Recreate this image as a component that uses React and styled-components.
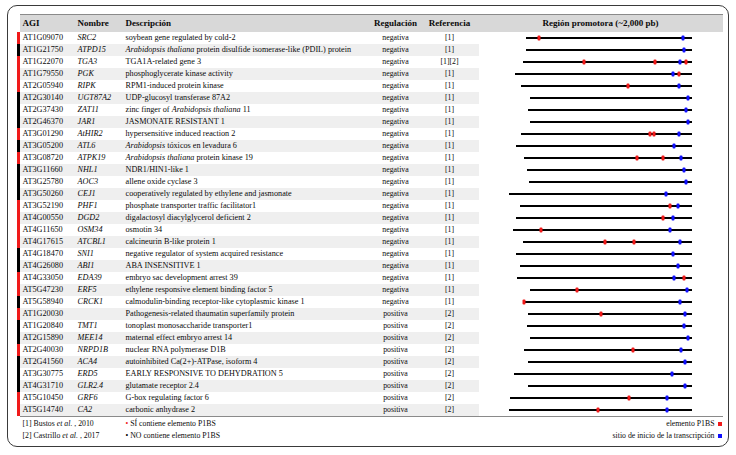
import React from 'react';
import styled, { createGlobalStyle } from 'styled-components';

const GlobalStyle = createGlobalStyle`
    html, body {
        margin: 0;
        padding: 0;
        background: #ffffff;
    }
    body {
        font-family: "Liberation Serif", "Times New Roman", serif;
        color: #0a0a0a;
    }
`

const COLS = '3px 55px 48px 248px 50px 58px 1fr';
const PROMO_X = 479;
const RED = '#f01a1a';
const BLUE = '#1010ff';

const rows = [
    { agi: 'AT1G09070', name: 'SRC2', desc: 'soybean gene regulated by cold-2', reg: 'negativa', ref: '[1]', p1bs: true, start: 526, marks: [['r', 539], ['b', 683]] },
    { agi: 'AT1G21750', name: 'ATPD15', desc: <><i>Arabidopsis thaliana</i> protein disulfide isomerase-like (PDIL) protein</>, reg: 'negativa', ref: '[1]', p1bs: false, start: 526, marks: [['b', 684]] },
    { agi: 'AT1G22070', name: 'TGA3', desc: 'TGA1A-related gene 3', reg: 'negativa', ref: '[1][2]', p1bs: true, start: 523, marks: [['r', 584], ['r', 655], ['b', 680], ['r', 686]] },
    { agi: 'AT1G79550', name: 'PGK', desc: 'phosphoglycerate kinase activity', reg: 'negativa', ref: '[1]', p1bs: true, start: 515, marks: [['b', 673], ['r', 679]] },
    { agi: 'AT2G05940', name: 'RIPK', desc: 'RPM1-induced protein kinase', reg: 'negativa', ref: '[1]', p1bs: true, start: 521, marks: [['r', 628], ['b', 679]] },
    { agi: 'AT2G30140', name: 'UGT87A2', desc: 'UDP-glucosyl transferase 87A2', reg: 'negativa', ref: '[1]', p1bs: false, start: 530, marks: [['b', 688]] },
    { agi: 'AT2G37430', name: 'ZAT11', desc: <>zinc finger of <i>Arabidopsis thaliana</i> 11</>, reg: 'negativa', ref: '[1]', p1bs: false, start: 528, marks: [['b', 686]] },
    { agi: 'AT2G46370', name: 'JAR1', desc: 'JASMONATE RESISTANT 1', reg: 'negativa', ref: '[1]', p1bs: false, start: 530, marks: [['b', 688]] },
    { agi: 'AT3G01290', name: 'AtHIR2', desc: 'hypersensitive induced reaction 2', reg: 'negativa', ref: '[1]', p1bs: true, start: 521, marks: [['r', 650], ['r', 654], ['b', 679]] },
    { agi: 'AT3G05200', name: 'ATL6', desc: <><i>Arabidopsis</i> tóxicos en levadura 6</>, reg: 'negativa', ref: '[1]', p1bs: false, start: 516, marks: [['b', 674]] },
    { agi: 'AT3G08720', name: 'ATPK19', desc: <><i>Arabidopsis thaliana</i> protein kinase 19</>, reg: 'negativa', ref: '[1]', p1bs: true, start: 524, marks: [['r', 637], ['r', 663], ['b', 681]] },
    { agi: 'AT3G11660', name: 'NHL1', desc: 'NDR1/HIN1-like 1', reg: 'negativa', ref: '[1]', p1bs: false, start: 527, marks: [['b', 684]] },
    { agi: 'AT3G25780', name: 'AOC3', desc: 'allene oxide cyclase 3', reg: 'negativa', ref: '[1]', p1bs: false, start: 529, marks: [['b', 686]] },
    { agi: 'AT3G50260', name: 'CEJ1', desc: 'cooperatively regulated by ethylene and jasmonate', reg: 'negativa', ref: '[1]', p1bs: false, start: 509, marks: [['b', 666]] },
    { agi: 'AT3G52190', name: 'PHF1', desc: 'phosphate transporter traffic facilitator1', reg: 'negativa', ref: '[1]', p1bs: true, start: 520, marks: [['r', 670], ['b', 678]] },
    { agi: 'AT4G00550', name: 'DGD2', desc: 'digalactosyl diacylglycerol deficient 2', reg: 'negativa', ref: '[1]', p1bs: true, start: 516, marks: [['r', 663], ['b', 673]] },
    { agi: 'AT4G11650', name: 'OSM34', desc: 'osmotin 34', reg: 'negativa', ref: '[1]', p1bs: true, start: 513, marks: [['r', 541], ['b', 670]] },
    { agi: 'AT4G17615', name: 'ATCBL1', desc: 'calcineurin B-like protein 1', reg: 'negativa', ref: '[1]', p1bs: true, start: 523, marks: [['r', 605], ['r', 634], ['b', 680]] },
    { agi: 'AT4G18470', name: 'SNI1', desc: 'negative regulator of system acquired resistance', reg: 'negativa', ref: '[1]', p1bs: false, start: 516, marks: [['b', 673]] },
    { agi: 'AT4G26080', name: 'ABI1', desc: 'ABA INSENSITIVE 1', reg: 'negativa', ref: '[1]', p1bs: false, start: 520, marks: [['b', 678]] },
    { agi: 'AT4G33050', name: 'EDA39', desc: 'embryo sac development arrest 39', reg: 'negativa', ref: '[1]', p1bs: true, start: 517, marks: [['b', 674], ['r', 684]] },
    { agi: 'AT5G47230', name: 'ERF5', desc: 'ethylene responsive element binding factor 5', reg: 'negativa', ref: '[1]', p1bs: true, start: 530, marks: [['r', 577], ['b', 687]] },
    { agi: 'AT5G58940', name: 'CRCK1', desc: 'calmodulin-binding receptor-like cytoplasmic kinase 1', reg: 'negativa', ref: '[1]', p1bs: false, start: 523, marks: [['r', 524], ['b', 680]] },
    { agi: 'AT1G20030', name: '', desc: 'Pathogenesis-related thaumatin superfamily protein', reg: 'positiva', ref: '[2]', p1bs: true, start: 528, marks: [['r', 601], ['b', 685]] },
    { agi: 'AT1G20840', name: 'TMT1', desc: 'tonoplast monosaccharide transporter1', reg: 'positiva', ref: '[2]', p1bs: false, start: 527, marks: [['b', 684]] },
    { agi: 'AT2G15890', name: 'MEE14', desc: 'maternal effect embryo arrest 14', reg: 'positiva', ref: '[2]', p1bs: false, start: 530, marks: [['b', 688]] },
    { agi: 'AT2G40030', name: 'NRPD1B', desc: 'nuclear RNA polymerase D1B', reg: 'positiva', ref: '[2]', p1bs: true, start: 524, marks: [['r', 633], ['b', 681]] },
    { agi: 'AT2G41560', name: 'ACA4', desc: 'autoinhibited Ca(2+)-ATPase, isoform 4', reg: 'positiva', ref: '[2]', p1bs: false, start: 528, marks: [['b', 685]] },
    { agi: 'AT3G30775', name: 'ERD5', desc: 'EARLY RESPONSIVE TO DEHYDRATION 5', reg: 'positiva', ref: '[2]', p1bs: false, start: 514, marks: [['b', 672]] },
    { agi: 'AT4G31710', name: 'GLR2.4', desc: 'glutamate receptor 2.4', reg: 'positiva', ref: '[2]', p1bs: false, start: 528, marks: [['b', 685]] },
    { agi: 'AT5G10450', name: 'GRF6', desc: 'G-box regulating factor 6', reg: 'positiva', ref: '[2]', p1bs: true, start: 510, marks: [['r', 629], ['b', 667]] },
    { agi: 'AT5G14740', name: 'CA2', desc: 'carbonic anhydrase 2', reg: 'positiva', ref: '[2]', p1bs: true, start: 509, marks: [['r', 598], ['b', 667]] },
];

function Promoter({ start, marks }) {
    const end = 692 - PROMO_X;
    return (
        <PromoSvg width="243" height="12" viewBox="0 0 243 12">
            <line x1={start - PROMO_X} y1="6" x2={end} y2="6" stroke="#000" strokeWidth="2" />
            {marks.map(([k, x], i) => (
                <rect key={i} x={x - PROMO_X - 1.5} y="3.5" width="3" height="5" rx="1" fill={k === 'r' ? RED : BLUE} />
            ))}
        </PromoSvg>
    );
}

export default function App() {
    return (
        <>
            <GlobalStyle />
            <Frame>
                <HeaderRow>
                    <span />
                    <HeadCell>AGI</HeadCell>
                    <HeadCell>Nombre</HeadCell>
                    <HeadCell>Descripción</HeadCell>
                    <HeadCell $center>Regulación</HeadCell>
                    <HeadCell $center>Referencia</HeadCell>
                    <HeadCell $center>Región promotora (~2,000 pb)</HeadCell>
                </HeaderRow>
                <Body>
                    {rows.map((r, i) => (
                        <Row key={r.agi}>
                            <Bar $red={r.p1bs} />
                            <Cell $stripe={i % 2 === 1}>{r.agi}</Cell>
                            <Cell $stripe={i % 2 === 1}><i>{r.name}</i></Cell>
                            <Cell $stripe={i % 2 === 1}>{r.desc}</Cell>
                            <SmallCell $stripe={i % 2 === 1}>{r.reg}</SmallCell>
                            <SmallCell $stripe={i % 2 === 1}>{r.ref}</SmallCell>
                            <PromoCell><Promoter start={r.start} marks={r.marks} /></PromoCell>
                        </Row>
                    ))}
                </Body>
                <Legend>
                    <span />
                    <LegendCol>
                        <div>[1] Bustos <i>et al.</i> , 2010</div>
                        <div>[2] Castrillo <i>et al.</i> , 2017</div>
                    </LegendCol>
                    <LegendCol>
                        <div><Dot $color={RED}>•</Dot> SÍ contiene elemento P1BS</div>
                        <div><Dot $color="#000">•</Dot> NO contiene elemento P1BS</div>
                    </LegendCol>
                    <KeyCol>
                        <KeyItem>elemento P1BS <Swatch $color={RED} /></KeyItem>
                        <KeyItem>sitio de inicio de la transcripción <Swatch $color={BLUE} /></KeyItem>
                    </KeyCol>
                </Legend>
            </Frame>
        </>
    );
}

const Frame = styled.div`
    box-sizing: border-box;
    width: 722px;
    height: 442px;
    margin: 5px 0 0 7px;
    border: 1.5px solid #3a3a3a;
    border-radius: 10px;
    padding: 7.5px 5.5px 0 8.5px;
`
const HeaderRow = styled.div`
    display: grid;
    grid-template-columns: ${COLS};
    height: 18.5px;
    & > *:not(:first-child) {
        background: #d8d8d8;
        border-top: 1px solid #8a8a8a;
    }
`
const HeadCell = styled.div`
    font-weight: bold;
    font-size: 9px;
    line-height: 17.5px;
    padding-left: ${p => p.$center ? 0 : 3}px;
    text-align: ${p => p.$center ? 'center' : 'left'};
    white-space: nowrap;
`
const Body = styled.div`
    border-bottom: 1px solid #8a8a8a;
    margin-left: 3px;
    & > * {
        margin-left: -3px;
    }
`
const Row = styled.div`
    display: grid;
    grid-template-columns: ${COLS};
    height: 12px;
`
const Bar = styled.div`
    background: ${p => p.$red ? RED : '#000'};
`
const Cell = styled.div`
    font-size: 8.2px;
    line-height: 12px;
    padding-left: 3px;
    white-space: nowrap;
    overflow: hidden;
    background: ${p => p.$stripe ? '#efefef' : 'transparent'};
`
const SmallCell = styled(Cell)`
    font-size: 7.8px;
    padding-left: 0;
    text-align: center;
`
const PromoCell = styled.div`
    display: flex;
    align-items: center;
`
const PromoSvg = styled.svg`
    display: block;
`
const Legend = styled.div`
    display: grid;
    grid-template-columns: 3px 103px 248px 1fr;
    padding-top: 0.5px;
`
const LegendCol = styled.div`
    font-size: 7.8px;
    line-height: 12.5px;
    padding-left: 3px;
    white-space: nowrap;
`
const Dot = styled.span`
    color: ${p => p.$color};
`
const KeyCol = styled.div`
    display: flex;
    flex-direction: column;
    align-items: flex-end;
    font-size: 7.8px;
    line-height: 12px;
    padding-right: 1px;
`
const KeyItem = styled.div`
    display: flex;
    align-items: center;
    gap: 3px;
    white-space: nowrap;
`
const Swatch = styled.span`
    display: inline-block;
    width: 4px;
    height: 4px;
    background: ${p => p.$color};
`
